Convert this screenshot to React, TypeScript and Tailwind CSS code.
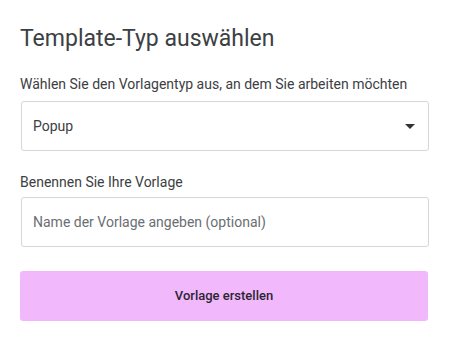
import React from "react";

export default function App() {
  return (
    <div className="w-[464px] h-[346px] bg-white" style={{ fontFamily: "Roboto, sans-serif" }}>
      <div className="px-5 pt-[24px]">
        <h1 className="text-[23px] leading-[30px] text-[#3c4043] font-normal">Template-Typ auswählen</h1>
        <div className="mt-[22px] text-[14px] leading-[16px] text-[#3c4043]">
          Wählen Sie den Vorlagentyp aus, an dem Sie arbeiten möchten
        </div>
        <div className="mt-[9px] ml-px w-[408px] h-[50px] border border-[#d6d6d9] rounded-[3px] flex items-center justify-between pl-[11px] pr-[12px]">
          <span className="text-[14px] text-[#3c4043]">Popup</span>
          <svg width="10" height="5" viewBox="0 0 10 5" className="mr-px">
            <path d="M0 0 L10 0 L5 5 Z" fill="#333" />
          </svg>
        </div>
        <div className="mt-[23px] text-[14px] leading-[16px] text-[#3c4043]">Benennen Sie Ihre Vorlage</div>
        <div className="mt-[7px] ml-px w-[408px] h-[50px] border border-[#d6d6d9] rounded-[3px] flex items-center pl-[11px]">
          <span className="text-[14px] text-[#6b6e73]">Name der Vorlage angeben (optional)</span>
        </div>
        <button className="mt-[24px] w-[408px] h-[50px] rounded-[3px] bg-[#f1b9fb] flex items-center justify-center text-[13px] font-medium text-[#2d2433]">
          Vorlage erstellen
        </button>
      </div>
    </div>
  );
}
